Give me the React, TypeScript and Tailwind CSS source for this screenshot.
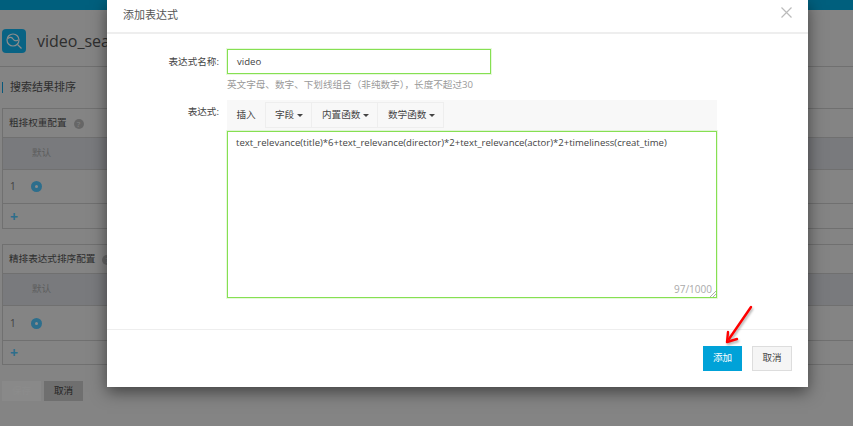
import React from "react";

const font = { fontFamily: '"Open Sans","Noto Sans CJK SC",sans-serif' };

function Caret() {
  return <span className="ml-[3px] inline-block w-0 h-0 border-x-[3.5px] border-x-transparent border-t-[3.5px] border-t-[#444] align-middle" />;
}

function Table({ title, rowClass, plusClass }: { title: string; rowClass: string; plusClass: string }) {
  return (
    <div className="border-y border-l border-[#ccc]">
      <div className="flex items-center h-[28px] pt-[1px] px-[6px] text-[9.6px] text-[#555]">
        {title}
        <span className="ml-[7px] w-[10px] h-[10px] rounded-full bg-[#bbb] text-[#eee] text-[8px] leading-[10px] text-center">?</span>
      </div>
      <div className="h-[33px] bg-[#dcdfe4] border-y border-[#ccc] flex items-center pl-[29px] text-[9.6px] text-[#aaa]">默认</div>
      <div className={`flex items-center pl-[7px] text-[10px] text-[#777] ${rowClass}`}>
        <span className="w-[21px]">1</span>
        <span className="w-[11px] h-[11px] rounded-full bg-[#52c8ff] flex items-center justify-center">
          <span className="w-[3px] h-[3px] rounded-full bg-white" />
        </span>
      </div>
      <div className={`border-t border-[#ccc] flex items-center pl-[7px] text-[14px] font-bold text-[#52c8ff] ${plusClass}`}>+</div>
    </div>
  );
}

export default function App() {
  return (
    <div style={font} className="relative w-[853px] h-[426px] overflow-hidden bg-[#f0f0f0]">
      {/* Page behind */}
      <div className="h-[10px] bg-[#00ade3]" />
      <div className="flex items-center h-[57px] pt-[6px] pl-[2px] border-b border-[#ccc]">
        <span className="w-[24px] h-[24px] rounded-[4px] bg-[#12b5f0] flex items-center justify-center">
          <svg width="18" height="18" viewBox="0 0 18 18" fill="none" stroke="#fff" strokeWidth="1.2">
            <circle cx="8" cy="8" r="6" />
            <path d="M3 6.5c2-2 4-1 5 .5s3 2.5 5 1M12.5 12.5l4 4" />
          </svg>
        </span>
        <span className="ml-[11px] text-[16px] text-[#555]">video_search</span>
      </div>
      <div className="flex items-center h-[41px] pl-[2px] text-[11px] text-[#555]">
        <span className="w-[1px] h-[11px] bg-[#10a0e0] mr-[7px]" />
        搜索结果排序
      </div>
      <div className="pl-[2px] flex flex-col gap-[15px]">
        <Table title="粗排权重配置" rowClass="h-[33px]" plusClass="h-[25px]" />
        <Table title="精排表达式排序配置" rowClass="h-[34px]" plusClass="h-[24px]" />
      </div>
      <div className="flex gap-[3px] pl-[2px] mt-[16px] text-[9.6px]">
        <span className="w-[39px] h-[20px] flex items-center justify-center bg-[#f9f9f9] text-white">保存</span>
        <span className="w-[39px] h-[20px] flex items-center justify-center bg-[#cacaca] text-[#444]">取消</span>
      </div>

      {/* Overlay */}
      <div className="absolute inset-0 bg-black/45" />

      {/* Modal */}
      <div className="absolute left-[107px] top-0 w-[701px] h-[387px] bg-white flex flex-col shadow-[0_5px_15px_rgba(0,0,0,0.5)]">
        <div className="h-[34px] shrink-0 border-b-2 border-[#eee] flex items-center justify-between pl-[16px] pr-[16px]">
          <span className="text-[11px] text-[#555] -mt-[1px]">添加表达式</span>
          <svg width="11" height="11" viewBox="0 0 11 11" stroke="#bbb" strokeWidth="1.2" className="-mt-[7px]">
            <path d="M.5.5l10 10M10.5.5l-10 10" />
          </svg>
        </div>
        <div className="flex-1 pt-[15px] text-[9.6px] text-[#444]">
          <div className="flex">
            <div className="w-[112px] text-right leading-[25px] mr-[8px]">表达式名称:</div>
            <div>
              <div className="w-[264px] h-[25px] border border-[#86e052] flex items-center pl-[9px] pt-[1px] shadow-[0_0_0_1px_rgba(134,224,82,0.2)]">video</div>
              <div className="text-[#999] leading-[14px] mt-[4px]">英文字母、数字、下划线组合（非纯数字），长度不超过30</div>
            </div>
          </div>
          <div className="flex mt-[8px]">
            <div className="w-[112px] text-right leading-[24px] mr-[8px]">表达式:</div>
            <div className="w-[490px]">
              <div className="h-[31px] bg-[#f8f8f8] flex items-center pb-[1px]">
                <span className="w-[38px] text-center">插入</span>
                <span className="w-[47px] h-[26px] pl-[9px] flex items-center border border-[#eee]">字段<Caret /></span>
                <span className="w-[66px] h-[26px] pl-[10px] flex items-center border border-l-0 border-[#eee]">内置函数<Caret /></span>
                <span className="w-[66px] h-[26px] pl-[10px] flex items-center border border-l-0 border-[#eee]">数学函数<Caret /></span>
              </div>
              <div className="relative h-[167px] border border-[#86e052] pt-[4px] pl-[8px] text-[9.55px] shadow-[0_0_0_1px_rgba(134,224,82,0.2)]">
                text_relevance(title)*6+text_relevance(director)*2+text_relevance(actor)*2+timeliness(creat_time)
                <span className="absolute right-[4px] bottom-0 text-[10px] text-[#aaa]">97/1000</span>
                <svg className="absolute right-0 bottom-0" width="6" height="6" viewBox="0 0 6 6" stroke="#999" strokeWidth="0.8">
                  <path d="M0 6L6 0M3 6l3-3" />
                </svg>
              </div>
            </div>
          </div>
        </div>
        <div className="h-[58px] shrink-0 border-t border-[#eee] flex justify-end items-start gap-[10px] pr-[16px] pt-[16px] text-[9.6px]">
          <span className="w-[39px] h-[25px] bg-[#00a2d8] text-white flex items-center justify-center">添加</span>
          <span className="w-[40px] h-[25px] bg-[#f5f5f5] border border-[#ddd] text-[#444] flex items-center justify-center">取消</span>
        </div>
      </div>

      {/* Red annotation arrow */}
      <svg className="absolute left-[720px] top-[300px] drop-shadow-[1px_2px_1px_rgba(0,0,0,0.3)]" width="40" height="50" viewBox="0 0 40 50" fill="none" stroke="#f00" strokeWidth="2.4" strokeLinecap="round" strokeLinejoin="round">
        <path d="M31 7L9 39" />
        <path d="M8 32l-1 10 10-3" />
      </svg>
    </div>
  );
}
